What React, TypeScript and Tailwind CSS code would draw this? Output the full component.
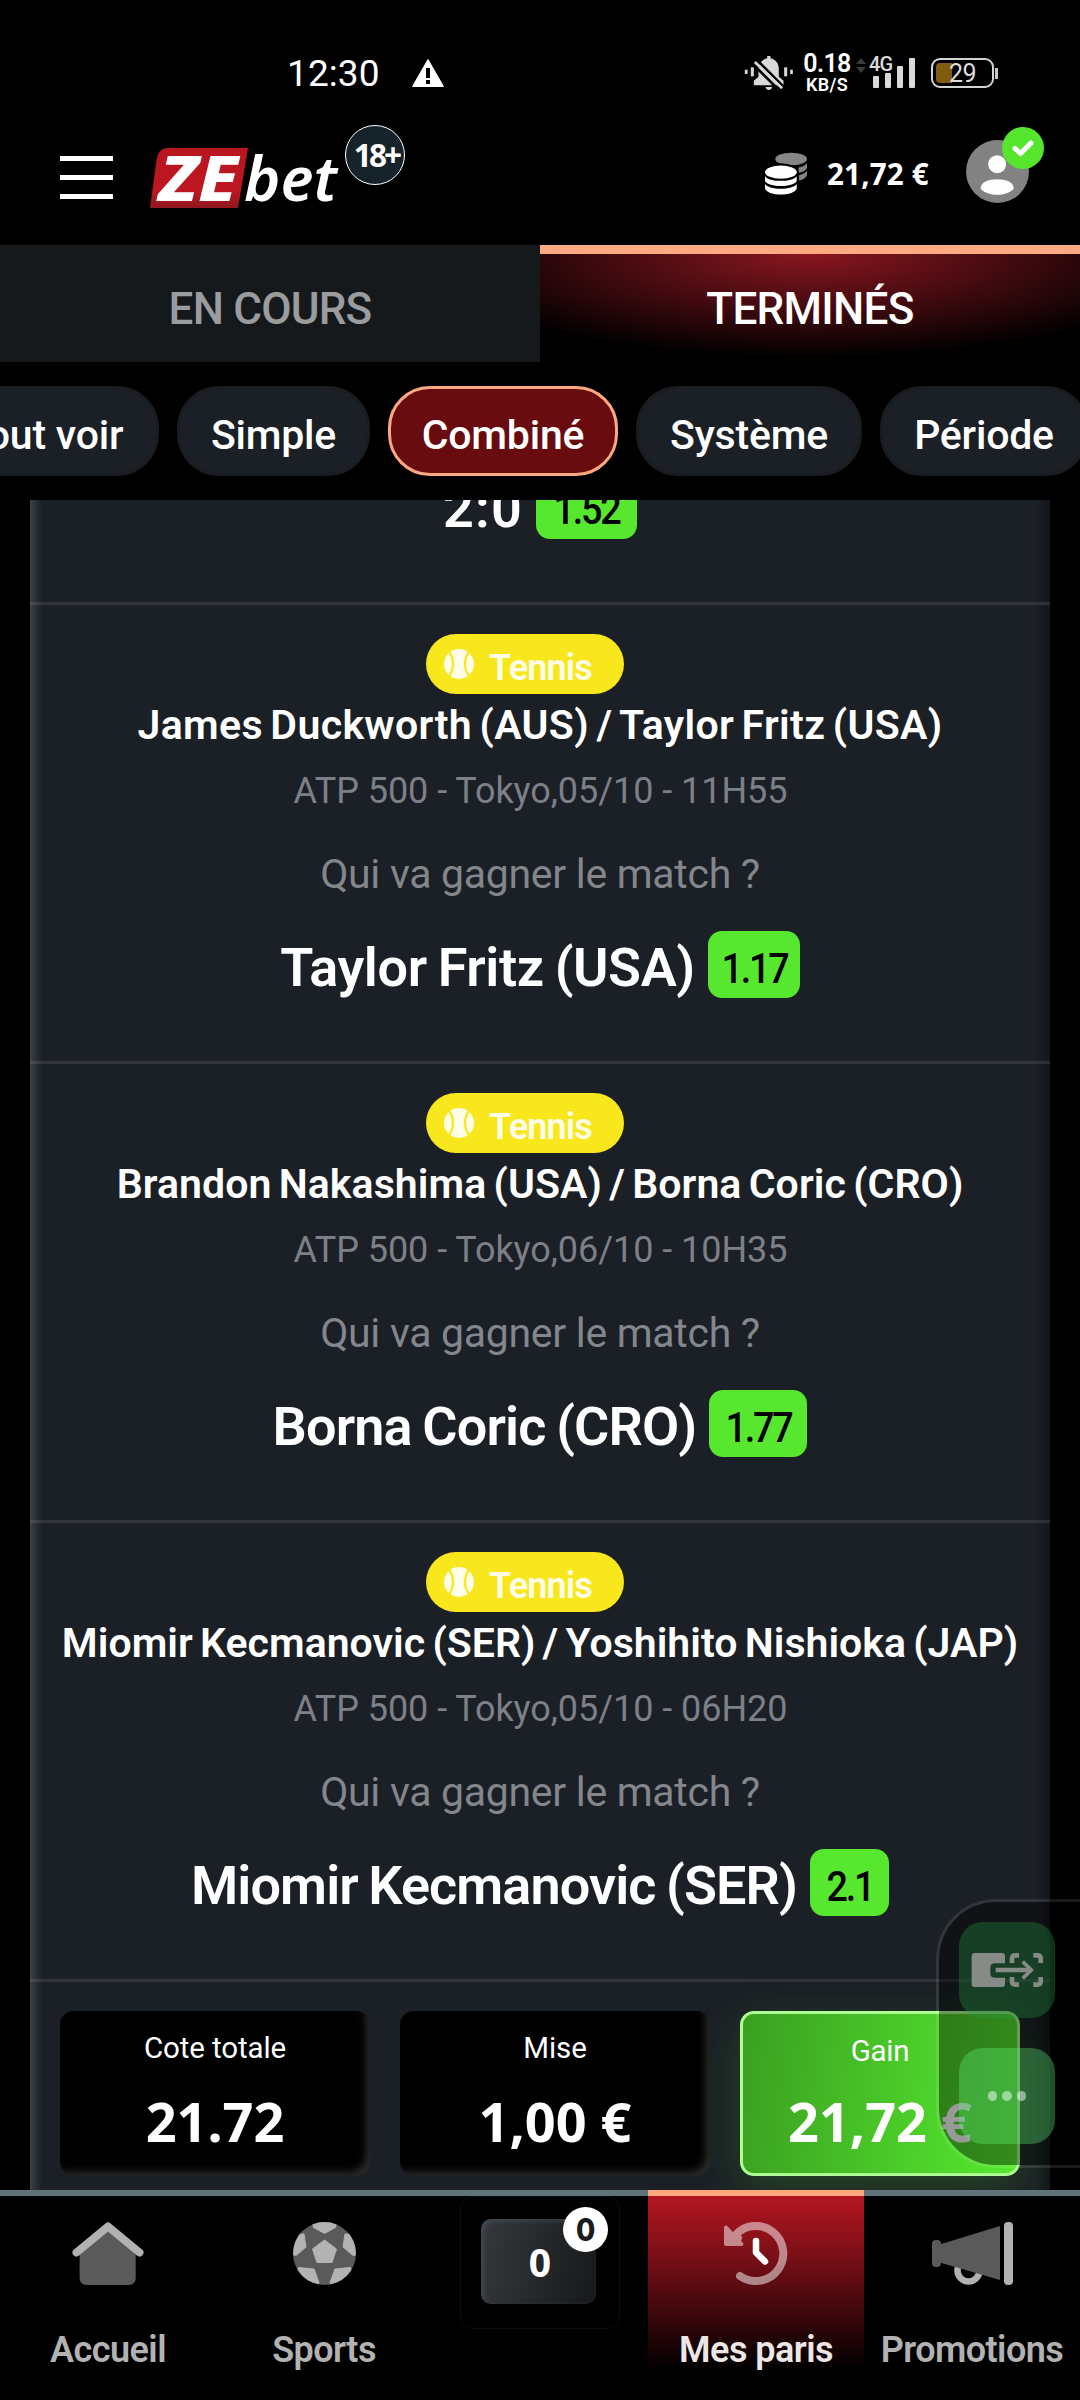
import React from 'react';
import type { ReactNode } from 'react';

type Match = {
  players: string;
  playersTracking: string;
  info: string;
  pick: string;
  pickTracking: string;
  odds: string;
  oddsWidth: string;
};

const matches: Match[] = [
  {
    players: 'James Duckworth (AUS) / Taylor Fritz (USA)',
    playersTracking: 'tracking-[0.350px] [word-spacing:-3px]',
    info: 'ATP 500 - Tokyo,05/10 - 11H55',
    pick: 'Taylor Fritz (USA)',
    pickTracking: 'tracking-[-0.400px] [word-spacing:-2px]',
    odds: '1.17',
    oddsWidth: 'w-[92px]',
  },
  {
    players: 'Brandon Nakashima (USA) / Borna Coric (CRO)',
    playersTracking: 'tracking-[0.080px] [word-spacing:-3px]',
    info: 'ATP 500 - Tokyo,06/10 - 10H35',
    pick: 'Borna Coric (CRO)',
    pickTracking: 'tracking-[-0.850px] [word-spacing:-2px]',
    odds: '1.77',
    oddsWidth: 'w-[98px]',
  },
  {
    players: 'Miomir Kecmanovic (SER) / Yoshihito Nishioka (JAP)',
    playersTracking: 'tracking-[0.030px] [word-spacing:-3px]',
    info: 'ATP 500 - Tokyo,05/10 - 06H20',
    pick: 'Miomir Kecmanovic (SER)',
    pickTracking: 'tracking-[-0.900px] [word-spacing:-2px]',
    odds: '2.1',
    oddsWidth: 'w-[79px]',
  },
];

const noto = "font-['Noto_Sans',sans-serif]";

function BellOff() {
  return (
    <svg className="h-[34px] w-[49px]" viewBox="40 44 146 102">
      <g fill="#d9d9d9">
        <rect x="42" y="85" width="8" height="13" />
        <rect x="60" y="78" width="9" height="27" />
        <rect x="160" y="78" width="9" height="27" />
        <rect x="178" y="85" width="8" height="13" />
        <path d="M109 44h10v7c16 4 25 16 25 32v23l14 12v14H69v-14l14-12V83c0-16 10-28 26-32z" />
        <path d="M104 137h20c-2 12-18 12-20 0z" />
      </g>
      <path d="M66 68 146 148M78 56 164 142" stroke="#000" strokeWidth="8" />
      <path d="M72 62 154 141" stroke="#d9d9d9" strokeWidth="8" />
    </svg>
  );
}

function StatusBar() {
  return (
    <div className="flex h-[110px] items-center pt-[36px] pl-[287px]">
      <span className="w-[95px] text-[37px] leading-none font-[450] tracking-[0.1px]">12:30</span>
      <svg className="ml-[30px] h-[28px] w-[32px]" viewBox="0 0 32 28">
        <path d="M16 0.5 31.5 27.5H0.5Z" fill="#fff" stroke="#fff" strokeLinejoin="round" />
        <path d="M14 9h4v10h-4zM14 21h4v4h-4z" fill="#000" />
      </svg>
      <div className="ml-[300px]">
        <BellOff />
      </div>
      <div className="ml-[10px] flex w-[48px] flex-col items-center font-semibold">
        <span className="text-[25px] leading-[24px] tracking-[-0.6px]">0.18</span>
        <span className="text-[18px] leading-[18px] tracking-[0.3px]">KB/S</span>
      </div>
      <svg className="ml-[5px] -mt-[16px] h-[15px] w-[10px]" viewBox="0 0 10 15" fill="#3c3c3c">
        <path d="M5 0l5 6H0zM5 15l5-6H0z" />
      </svg>
      <div className="relative ml-[6px] h-[32px] w-[44px]">
        <span className="absolute -top-[3px] -left-[3px] text-[20px] leading-[20px] font-medium tracking-[-0.8px] text-[#d9d9d9]">4G</span>
        <svg className="absolute inset-0" width="44" height="32" viewBox="0 0 44 32" fill="#d9d9d9">
          <rect x="1" y="19" width="6" height="12" rx="1" />
          <rect x="13" y="16" width="6" height="15" rx="1" />
          <rect x="25" y="9" width="6" height="22" rx="1" />
          <rect x="37" y="1" width="6" height="30" rx="1" />
        </svg>
      </div>
      <div className="relative ml-[15px] flex h-[30px] w-[63px] items-center justify-center rounded-[9px] border-[2.5px] border-[#d4d4d4]">
        <div className="absolute top-[2.5px] left-[2.5px] h-[20px] w-[16px] rounded-l-[4px] bg-[#7f5d0d]" />
        <span className="relative text-[25px] leading-none tracking-[-0.6px] text-[#dcdcdc]">29</span>
      </div>
      <div className="ml-[1px] h-[11px] w-[2.5px] bg-[#c8c8c8]" />
    </div>
  );
}

function Logo() {
  return (
    <svg className="h-[60px] w-[192px] overflow-visible" viewBox="0 0 192 60">
      <defs>
        <linearGradient id="logoRed" x1="0" y1="0" x2="0" y2="1">
          <stop offset="0" stopColor="#b9151f" />
          <stop offset="0.7" stopColor="#bd1822" />
          <stop offset="1" stopColor="#8f1820" />
        </linearGradient>
      </defs>
      <path d="M18 0H98L88 60H0L6.500 12Q8.500 0 18 0Z" fill="url(#logoRed)" />
      <text x="9" y="53" fill="#fff" fontFamily="'Noto Sans', sans-serif" fontStyle="italic" fontWeight="800" fontSize="63" textLength="79" lengthAdjust="spacingAndGlyphs">
        ZE
      </text>
      <text x="94" y="53" fill="#fff" fontFamily="'Noto Sans', sans-serif" fontStyle="italic" fontWeight="600" fontSize="61" textLength="93" lengthAdjust="spacingAndGlyphs">
        bet
      </text>
    </svg>
  );
}

function Coins() {
  return (
    <svg className="h-[43px] w-[42px]" viewBox="105 337 127 128">
      <g fill="#868686">
        <ellipse cx="184" cy="357" rx="48" ry="19" />
        <path d="M206 383C218 381 228 376 232 369V384C228 392 218 397 207 399Z" />
        <path d="M208 406C220 403 229 399 232 392V406C229 414 220 419 208 422Z" />
      </g>
      <ellipse cx="153" cy="397" rx="54" ry="27" fill="#000" />
      <g fill="#fff">
        <ellipse cx="153" cy="397" rx="48" ry="20" />
        <path d="M105 409C115 428 191 428 201 409V424C191 444 115 444 105 424Z" />
        <path d="M105 433C115 452 191 452 201 433V446C191 471 115 471 105 446Z" />
      </g>
    </svg>
  );
}

function Header() {
  return (
    <header className="flex h-[135px] items-center pl-[60px]">
      <div className="flex w-[53px] flex-col gap-[14.500px]">
        <div className="h-[4.500px] bg-white" />
        <div className="h-[4.500px] bg-white" />
        <div className="h-[4.500px] bg-white" />
      </div>
      <div className="relative ml-[37px]">
        <Logo />
        <div className={`absolute -top-[23px] left-[195px] flex size-[60px] items-center justify-center rounded-full border-[1.500px] border-white bg-[#17232a] pl-[3px] text-[31.500px] leading-none font-bold tracking-[-2.800px] ${noto}`}>
          18+
        </div>
      </div>
      <div className="ml-auto flex items-center pr-[51px]">
        <div className="pb-[8px]">
          <Coins />
        </div>
        <span className={`ml-[20px] w-[103px] pb-[7px] text-[29.500px] leading-none font-bold tracking-[0.200px] whitespace-nowrap ${noto}`}>21,72 €</span>
        <div className="relative ml-[36px] mb-[12px]">
          <svg className="size-[63px]" viewBox="708 300 190 190">
            <circle cx="803" cy="395" r="95" fill="#828282" />
            <circle cx="802" cy="373" r="27" fill="#fff" />
            <path d="M752 447C752 426 775 418 802 418S852 426 852 447C840 460 822 465 802 465S764 460 752 447Z" fill="#fff" />
          </svg>
          <div className="absolute -top-[13px] left-[36px] flex size-[42px] items-center justify-center rounded-full bg-[#55e52d]">
            <svg className="h-[17px] w-[22px]" viewBox="0 0 22 17" fill="none" stroke="#fff" strokeWidth="5" strokeLinecap="round" strokeLinejoin="round">
              <path d="M3 8.500 8.500 13.500 19 3" />
            </svg>
          </div>
        </div>
      </div>
    </header>
  );
}

function Tabs() {
  return (
    <div className="flex h-[117px] text-center text-[44px] font-[550]">
      <div className="flex-1 bg-[#16191b] pt-[34px] leading-[60px] tracking-[-0.800px] text-[#9b9c9e]">EN COURS</div>
      <div className="flex-1 border-t-[9px] border-[#fda981] bg-[radial-gradient(390px_104px_at_50%_0,#8a1620,#000)] pt-[25px] leading-[60px] tracking-[-0.700px]">
        TERMINÉS
      </div>
    </div>
  );
}

function Pill({ width, active, children }: { width: string; active?: boolean; children: ReactNode }) {
  const colors = active ? 'border-[#fca982] bg-[#680c10]' : 'border-[#191d20] bg-[#1b1f26]';
  return (
    <div className={`flex h-[90px] shrink-0 items-center justify-center rounded-[42px] border-[3px] pt-[10px] ${colors} ${width}`}>{children}</div>
  );
}

function Filters() {
  return (
    <div className="-ml-[71px] flex h-[138px] w-[1300px] gap-[18px] pt-[24px] text-[41px] font-medium tracking-[-0.200px]">
      <Pill width="w-[230px]">Tout voir</Pill>
      <Pill width="w-[193px]">Simple</Pill>
      <Pill width="w-[230px]" active>
        Combiné
      </Pill>
      <Pill width="w-[226px]">Système</Pill>
      <Pill width="w-[208px]">Période</Pill>
    </div>
  );
}

function Pick({ label, odds, oddsWidth, tracking }: { label: string; odds: string; oddsWidth: string; tracking: string }) {
  return (
    <div className="flex h-[67px] justify-center gap-[13px]">
      <span className={`text-[54px] leading-[74px] font-semibold whitespace-nowrap ${tracking}`}>{label}</span>
      <span className={`flex h-[67px] justify-center rounded-[14px] bg-[#57e72f] text-[42px] leading-[75px] font-medium text-black ${oddsWidth}`}>
        <span className="scale-x-90 pl-[1px] tracking-[-2.500px]">{odds}</span>
      </span>
    </div>
  );
}

function TennisTag() {
  return (
    <div className="-ml-[30px] flex h-[60px] w-[198px] items-center rounded-full bg-[#f8e71c] pl-[18px]">
      <svg className="size-[30px]" viewBox="0 0 30 30">
        <circle cx="15" cy="15" r="15" fill="#fffde8" />
        <g fill="none" stroke="#f8e71c" strokeWidth="2.200">
          <path d="M4 1Q14 15 4 29" />
          <path d="M26 1Q16 15 26 29" />
        </g>
      </svg>
      <span className="ml-[15px] pt-[7px] text-[36px] leading-none font-semibold tracking-[-0.850px] text-[#fffde8]">Tennis</span>
    </div>
  );
}

function MatchRow({ match }: { match: Match }) {
  return (
    <section className="flex h-[459px] flex-col items-center border-b-[3px] border-white/10 pt-[29px]">
      <TennisTag />
      <h2 className={`mt-[1px] text-[41px] leading-[60px] font-semibold whitespace-nowrap ${match.playersTracking}`}>{match.players}</h2>
      <p className="mt-[11px] pl-[1px] text-[36px] leading-[50px] tracking-[-0.050px] whitespace-nowrap text-[#7d8086]">{match.info}</p>
      <p className="mt-[33px] mb-[32px] text-[41px] leading-[50px] font-[450] tracking-[-0.300px] whitespace-nowrap text-[#83868b]">
        Qui va gagner le match ?
      </p>
      <Pick label={match.pick} odds={match.odds} oddsWidth={match.oddsWidth} tracking={match.pickTracking} />
    </section>
  );
}

function Stat({ label, value }: { label: string; value: string }) {
  return (
    <div className="h-[165px] w-[310px] rounded-[14px] bg-black pt-[17px] text-center shadow-[inset_-7px_-7px_9px_-3px_rgba(255,255,255,0.17)]">
      <div className="text-[29.500px] leading-[40px] font-[450] tracking-[-0.100px]">{label}</div>
      <div className={`mt-[23px] text-[54px] leading-[60px] font-bold ${noto}`}>{value}</div>
    </div>
  );
}

function Summary() {
  return (
    <div className="flex gap-[30px] px-[30px] pt-[29px]">
      <Stat label="Cote totale" value="21.72" />
      <Stat label="Mise" value="1,00 €" />
      <div className="h-[165px] w-[280px] rounded-[14px] border-[3px] border-[#adff94] bg-[linear-gradient(97deg,#3b9f21,#56ea2f)] pt-[17px] text-center shadow-[0_14px_50px_rgba(86,234,47,0.2)]">
        <div className="text-[29.500px] leading-[40px] font-[450] tracking-[-0.300px]">Gain</div>
        <div className={`mt-[20px] text-[54px] leading-[60px] font-bold whitespace-nowrap ${noto}`}>21,72 €</div>
      </div>
    </div>
  );
}

function HomeIcon() {
  return (
    <svg className="h-[63px] w-[72px]" viewBox="0 0 72 63">
      <path d="M36 9 63.700 31V56Q63.700 63 56.500 63H15Q7.600 63 7.600 56V31Z" fill="#5a5a5a" />
      <path d="M4.500 30.500 36 4.500 67.500 30.500" fill="none" stroke="#b2b2b2" strokeWidth="8" strokeLinecap="round" strokeLinejoin="round" />
    </svg>
  );
}

function FootballIcon() {
  return (
    <svg className="size-[63px]" viewBox="0 0 63 63">
      <clipPath id="ball">
        <circle cx="31.500" cy="31.500" r="31.500" />
      </clipPath>
      <g clipPath="url(#ball)">
        <rect width="63" height="63" fill="#5a5a5a" />
        <g fill="#b3b3b3" stroke="#b3b3b3" strokeLinejoin="round">
          <path d="M31.500 18 43.500 27 39 40.500H24L19.500 27Z" />
          <path d="M19-2 20.500 5.500 31.500 11.500 42.500 5.500 44-2Z" />
          <path d="M-2 12 11 12 13 25 3 33.500-3 32Z" />
          <path d="M65 12 52 12 50 25 60 33.500 66 32Z" />
          <path d="M5.500 45.500 21 47 26 60.500 24 66 0 66Z" />
          <path d="M57.500 45.500 42 47 37 60.500 39 66 63 66Z" />
        </g>
      </g>
    </svg>
  );
}

function HistoryIcon() {
  return (
    <svg className="h-[63px] w-[64px]" viewBox="0 0 64 63">
      <g opacity="0.500">
        <path d="M16 54A27.500 27.500 0 1 0 11 13.500L14 16" fill="none" stroke="#fff" strokeWidth="8" strokeLinecap="round" />
        <path d="M2 5.500V22H17.500Z" fill="#fff" stroke="#fff" strokeWidth="4" strokeLinejoin="round" />
      </g>
      <path d="M32 19V30.500L41 39.500" fill="none" stroke="#fff" strokeWidth="6.500" strokeLinecap="round" strokeLinejoin="round" />
    </svg>
  );
}

function MegaphoneIcon() {
  return (
    <svg className="h-[63px] w-[81px]" viewBox="0 0 81 63">
      <circle cx="36.500" cy="48.500" r="11" fill="none" stroke="#b2b2b2" strokeWidth="6.500" />
      <path d="M6 23 68 4V58L6 40Z" fill="#5a5a5a" />
      <rect x="0" y="18" width="9" height="27" rx="4" fill="#5a5a5a" />
      <rect x="72" y="0" width="9" height="63" rx="4" fill="#b2b2b2" />
    </svg>
  );
}

function NavItem({ icon, label, active }: { icon: ReactNode; label: string; active?: boolean }) {
  const look = active
    ? 'border-[#ffa67d] text-[#ece6e6] bg-[linear-gradient(to_bottom,#b31620_0,#7a0f17_60px,#000_174px)]'
    : 'border-[#61737a] text-[#b2b2b2]';
  return (
    <div className={`flex w-[216px] flex-col items-center border-t-[6px] pt-[26px] ${look}`}>
      {icon}
      <span className="mt-[40px] text-[36px] leading-[50px] font-semibold tracking-[-0.550px]">{label}</span>
    </div>
  );
}

function BottomNav() {
  return (
    <nav className="flex h-[210px] bg-black">
      <NavItem icon={<HomeIcon />} label="Accueil" />
      <NavItem icon={<FootballIcon />} label="Sports" />
      <div className="w-[216px] border-t-[6px] border-[#61737a]">
        <div className="mx-auto h-[133px] w-[160px] rounded-[12px] border border-[#0d0d0d] pt-[22px]">
          <div className={`relative ml-[20px] flex h-[85px] w-[115px] items-center justify-center rounded-[10px] bg-[linear-gradient(100deg,#34393d,#17191b)] pl-[3px] text-[39px] leading-none font-bold shadow-[inset_2px_2px_5px_rgba(90,105,115,0.45)] ${noto}`}>
            0
            <span className="absolute -top-[12px] left-[82px] flex size-[45px] items-center justify-center rounded-full bg-white font-['Inter',sans-serif] text-[31px] font-extrabold text-[#191b1d]">
              <span className="scale-x-90">0</span>
            </span>
          </div>
        </div>
      </div>
      <NavItem icon={<HistoryIcon />} label="Mes paris" active />
      <NavItem icon={<MegaphoneIcon />} label="Promotions" />
    </nav>
  );
}

function FloatingPanel() {
  return (
    <div className="absolute top-[1899px] left-[936px] flex h-[269px] w-[170px] flex-col gap-[30px] rounded-l-[60px] border-[3px] border-white/10 bg-black/40 bg-clip-padding pt-[20px] pl-[20px]">
      <div className="size-[96px] rounded-[24px] bg-[rgba(40,156,70,0.33)]">
        <svg className="size-full" viewBox="177 126 288 288">
          <path d="M225 219H305Q315 219 315 229V250H286Q271 250 271 262V281Q271 293 286 293H315V311Q315 321 305 321H225Q215 321 215 311V229Q215 219 225 219Z" fill="#868b88" />
          <g fill="none" stroke="#868b88" strokeWidth="14">
            <path d="M336 249V236Q336 226 346 226H357M400 226H412Q422 226 422 236V249M422 291V304Q422 314 412 314H400M357 314H346Q336 314 336 304V291" />
            <path d="M287 270H390" />
            <path d="M368 245 394 270 368 295" strokeWidth="11" />
          </g>
        </svg>
      </div>
      <div className="flex size-[96px] items-center justify-center gap-[5px] rounded-[24px] bg-[rgba(100,255,125,0.32)]">
        <i className="size-[9.500px] rounded-full bg-white/50" />
        <i className="size-[9.500px] rounded-full bg-white/50" />
        <i className="size-[9.500px] rounded-full bg-white/50" />
      </div>
    </div>
  );
}

export default function App() {
  return (
    <div className="relative flex h-[2400px] w-[1080px] flex-col overflow-hidden bg-black font-['Roboto',sans-serif] text-white">
      <StatusBar />
      <Header />
      <Tabs />
      <Filters />
      <main className="mx-[30px] h-[1690px] overflow-hidden bg-[linear-gradient(to_right,#3a4147_0,#1b1f26_12px,#1b1f26_1006px,#121519_1020px)]">
        <section className="-mt-[28px] h-[133px] border-b-[3px] border-white/10">
          <Pick label="2:0" odds="1.52" oddsWidth="w-[101px]" tracking="tracking-[1.200px]" />
        </section>
        {matches.map((match) => (
          <MatchRow key={match.players} match={match} />
        ))}
        <Summary />
      </main>
      <BottomNav />
      <FloatingPanel />
    </div>
  );
}
